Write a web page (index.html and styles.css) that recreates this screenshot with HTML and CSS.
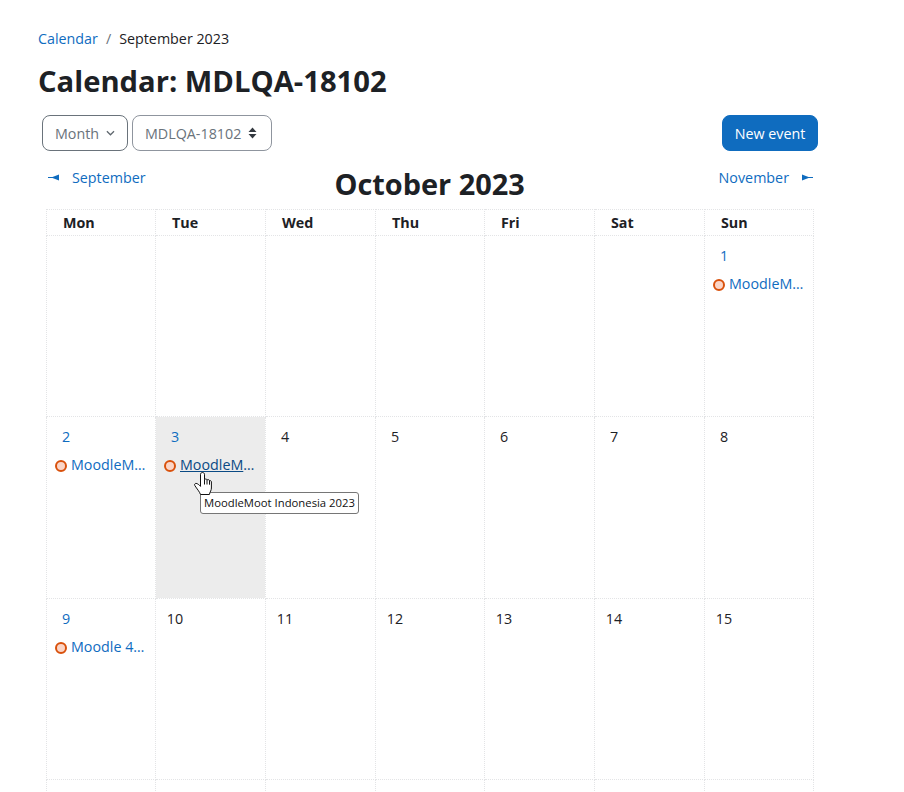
FILE: index.html
```html
<!DOCTYPE html>
<html lang="en">
<head>
    <meta charset="UTF-8">
    <meta name="viewport" content="width=device-width, initial-scale=1.0">
    <title>Calendar: MDLQA-18102</title>
    <link rel="stylesheet" href="styles.css">
</head>
<body>
<div class="page">
    <nav class="breadcrumb">
        <a href="#">Calendar</a>
        <span class="crumb-sep">/</span>
        <span>September 2023</span>
    </nav>

    <h1 class="page-title">Calendar: MDLQA-18102</h1>

    <!-- Filters and new event -->
    <div class="controls">
        <button class="select-btn select-month">Month
            <svg class="chevron" width="10" height="6" viewBox="0 0 10 6"><path d="M1 1l4 4 4-4" fill="none" stroke="#5f676e" stroke-width="1.4"/></svg>
        </button>
        <button class="select-btn select-course">MDLQA-18102
            <svg class="updown" width="9" height="12" viewBox="0 0 9 12"><path d="M4.5 0.5L8.5 5H0.5zM4.5 11.5L0.5 7H8.5z" fill="#343a40"/></svg>
        </button>
        <button class="new-event">New event</button>
    </div>

    <!-- Month navigation -->
    <div class="month-nav">
        <a href="#" class="month-link">
            <svg width="11" height="7" viewBox="0 0 11 7"><path d="M0 3h4.500L11 .5v6L4.500 4H0z" fill="#0f6cbf"/></svg>
            <span>September</span>
        </a>
        <h2 class="month-title">October 2023</h2>
        <a href="#" class="month-link month-next">
            <span>November</span>
            <svg width="11" height="7" viewBox="0 0 11 7"><path d="M0 .5L6.500 3H11v1H6.500L0 6.500z" fill="#0f6cbf"/></svg>
        </a>
    </div>

    <table class="calendar">
        <thead>
            <tr><th>Mon</th><th>Tue</th><th>Wed</th><th>Thu</th><th>Fri</th><th>Sat</th><th>Sun</th></tr>
        </thead>
        <tbody>
            <tr>
                <td></td><td></td><td></td><td></td><td></td><td></td>
                <td>
                    <a href="#" class="day has-events">1</a>
                    <div class="event"><span class="dot"></span><a href="#" class="event-name">MoodleMoot Indonesia 2023</a></div>
                </td>
            </tr>
            <tr>
                <td>
                    <a href="#" class="day has-events">2</a>
                    <div class="event"><span class="dot"></span><a href="#" class="event-name">MoodleMoot Indonesia 2023</a></div>
                </td>
                <td class="today">
                    <a href="#" class="day has-events">3</a>
                    <div class="event"><span class="dot"></span><a href="#" class="event-name hovered">MoodleMoot Indonesia 2023</a></div>
                    <svg class="cursor" width="18" height="23" viewBox="0 0 18 23">
                        <path d="M8.500.5c1 0 2 .8 2 1.800V7.500c1-.8 2.200-.6 2.600.4 1-.6 2.200-.3 2.400.8 1-.4 1.900.2 1.900 1.300V16c0 2.500-1.400 3.500-2 6.500H6.500C5.500 19.500 3 17 .8 13.500c-.6-1 .1-2.200 1.300-2.100 1.500.1 3 1.500 4.400 3V2.300c0-1 .9-1.800 2-1.800z" fill="#fff" stroke="#111" stroke-width="1"/>
                        <path d="M10.500 7.500v5M13 8v4.500M15.500 8.700v4" stroke="#111" stroke-width="1" fill="none"/>
                    </svg>
                    <div class="tooltip">MoodleMoot Indonesia 2023</div>
                </td>
                <td><span class="day">4</span></td>
                <td><span class="day">5</span></td>
                <td><span class="day">6</span></td>
                <td><span class="day">7</span></td>
                <td><span class="day">8</span></td>
            </tr>
            <tr>
                <td>
                    <a href="#" class="day has-events">9</a>
                    <div class="event"><span class="dot"></span><a href="#" class="event-name">Moodle 4.3 release</a></div>
                </td>
                <td><span class="day">10</span></td>
                <td><span class="day">11</span></td>
                <td><span class="day">12</span></td>
                <td><span class="day">13</span></td>
                <td><span class="day">14</span></td>
                <td><span class="day">15</span></td>
            </tr>
            <tr>
                <td></td><td></td><td></td><td></td><td></td><td></td><td></td>
            </tr>
        </tbody>
    </table>
</div>
</body>
</html>
```

FILE: styles.css
```css
html, body {
    height: 792px;
    overflow: hidden;
}

body {
    font-family: "Open Sans", "Noto Sans", Arial, sans-serif;
    font-size: 14.3px;
    color: #1d2125;
    background: #fff;
    margin: 0;
}

a {
    color: #0f6cbf;
    text-decoration: none;
}

.page {
    width: 780px;
    padding: 28px 0 0 38px;
}

.breadcrumb {
    display: flex;
    gap: 8px;
    height: 21px;
    line-height: 21px;
}

.crumb-sep {
    color: #6a737b;
}

.page-title {
    font-size: 29.2px;
    font-weight: 700;
    line-height: 36px;
    margin: 14px 0 16px;
}

/* Filters row */
.controls {
    display: flex;
    gap: 4px;
    padding-left: 4px;
}

.select-btn {
    display: flex;
    align-items: center;
    height: 36px;
    padding: 0 12px;
    font: inherit;
    color: #6a737b;
    background: #fff;
    border: 1px solid #8f959e;
    border-radius: 8px;
}

.select-month {
    width: 86px;
    gap: 7px;
    border-color: #6a737b;
}

.select-course {
    width: 140px;
    gap: 7px;
}

.new-event {
    margin-left: auto;
    width: 96px;
    height: 36px;
    font: inherit;
    color: #fff;
    background: #0f6cbf;
    border: 1px solid #0f6cbf;
    border-radius: 8px;
}

/* Month navigation */
.month-nav {
    display: flex;
    justify-content: space-between;
    align-items: flex-start;
    margin: 14px 5px 0 10px;
    height: 44px;
}

.month-link {
    display: flex;
    align-items: center;
    gap: 13px;
    line-height: 26px;
}

.month-link svg {
    margin-top: -2px;
}

.month-title {
    font-size: 28.9px;
    font-weight: 700;
    line-height: 37px;
    margin: 0;
    padding-right: 5px;
}

/* Calendar grid */
.calendar {
    border-collapse: collapse;
    table-layout: fixed;
    width: 767px;
    margin-left: 8px;
}

.calendar th,
.calendar td {
    box-sizing: border-box;
    border: 1px dotted #e3e4e6;
    padding: 0;
}

.calendar th {
    width: 110px;
    height: 26px;
    padding-left: 16px;
    text-align: left;
    font-weight: 700;
    line-height: 25px;
}

.calendar th:nth-child(1),
.calendar th:nth-child(4),
.calendar th:nth-child(7) {
    width: 109px;
}

.calendar td {
    position: relative;
    height: 181px;
    vertical-align: top;
    padding: 8px 8px 0;
}

.calendar tbody tr:nth-child(2) td {
    height: 182px;
}

.today {
    background: #ececec;
}

.day {
    display: block;
    width: 22px;
    height: 24px;
    text-align: center;
    line-height: 24px;
    color: #1d2125;
}

.day.has-events {
    color: #0f6cbf;
}

.event {
    display: flex;
    align-items: center;
    gap: 4px;
    margin-top: 4px;
    height: 22px;
}

.dot {
    flex: none;
    box-sizing: border-box;
    width: 12px;
    height: 12px;
    margin-top: 3px;
    background: #fbd5c7;
    border: 2px solid #d9510c;
    border-radius: 50%;
}

.event-name {
    overflow: hidden;
    white-space: nowrap;
    text-overflow: ellipsis;
}

.hovered {
    color: #0a4a84;
    text-decoration: underline;
}

/* Hover state in the screenshot: pointer and tooltip */
.cursor {
    position: absolute;
    left: 38px;
    top: 55px;
    z-index: 3;
}

.tooltip {
    position: absolute;
    left: 44px;
    top: 75px;
    z-index: 2;
    height: 20px;
    padding: 0 3px;
    font-size: 11.3px;
    line-height: 20px;
    white-space: nowrap;
    color: #111;
    background: #fff;
    border: 1px solid #767676;
    border-radius: 3px;
}
```
